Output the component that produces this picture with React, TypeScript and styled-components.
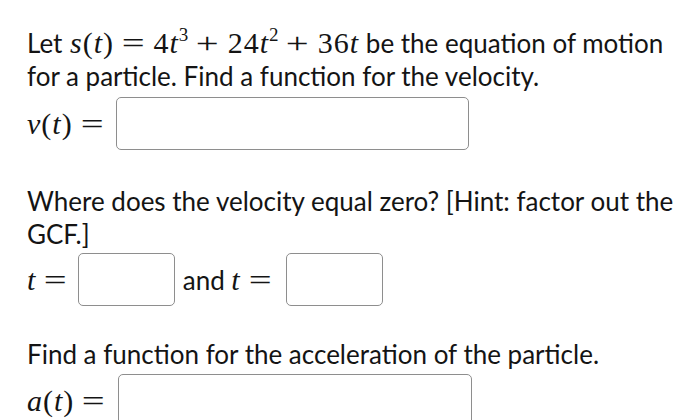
import React from "react";
import styled, { createGlobalStyle } from "styled-components";

const Global = createGlobalStyle`
  html, body { margin: 0; padding: 0; background: #ffffff; }
  body { font-family: Lato, "Open Sans", sans-serif; color: #141414; }
`;

const Page = styled.div`
  width: 700px;
  height: 420px;
  overflow: hidden;
  box-sizing: border-box;
  padding: 26px 10px 0 27px;
`;

const Para = styled.p<{ $top?: number }>`
  margin: ${(p) => p.$top ?? 0}px 0 0 0;
  font-size: 26px;
  line-height: 33px;
  width: 650px;
`;

const Row = styled.div<{ $top?: number }>`
  display: flex;
  align-items: center;
  margin-top: ${(p) => p.$top ?? 0}px;
  font-size: 26px;
  line-height: 33px;
`;

const Math = styled.span<{ $pad?: number }>`
  font-family: "Liberation Serif", "DejaVu Serif", serif;
  font-size: 30px;
  letter-spacing: 1px;
  white-space: nowrap;
  margin-left: ${(p) => p.$pad ?? 0}px;
`;

const V = styled.i`
  font-style: italic;
`;

const Sup = styled.sup`
  font-size: 19px;
  vertical-align: 12px;
  line-height: 0;
  letter-spacing: 0;
`;

const Op = styled.span`
  display: inline-block;
  font-family: "Liberation Serif", serif;
  font-size: 29px;
  letter-spacing: 0;
  transform: scaleX(1.4);
  margin: 0 12px 0 11px;
`;

const Box = styled.div<{ $w: number }>`
  width: ${(p) => p.$w}px;
  height: 51px;
  border: 1px solid #8e8e8e;
  border-radius: 5px;
  box-sizing: content-box;
  background: #fff;
  flex: none;
`;

const Label = styled.span<{ $gap: number }>`
  margin-right: ${(p) => p.$gap}px;
  display: inline-flex;
  align-items: baseline;
`;

const And = styled.span`
  margin: 0 6px 0 8px;
`;

export default function App() {
  return (
    <Page>
      <Global />
      <Para>
        Let{" "}
        <Math $pad={1}>
          <V>s</V>(<V>t</V>)<Op>=</Op>4<V>t</V>
          <Sup>3</Sup>
          <Op>+</Op>24<V>t</V>
          <Sup>2</Sup>
          <Op>+</Op>36<V>t</V>
        </Math>{" "}
        be the equation of motion for a particle. Find a function for the velocity.
      </Para>
      <Row $top={4}>
        <Label $gap={4}>
          <Math>
            <V>v</V>(<V>t</V>)<Op>=</Op>
          </Math>
        </Label>
        <Box $w={351} />
      </Row>
      <Para $top={35}>
        Where does the velocity equal zero? [Hint: factor out the GCF.]
      </Para>
      <Row $top={2}>
        <Label $gap={2}>
          <Math>
            <V>t</V>
            <Op>=</Op>
          </Math>
        </Label>
        <Box $w={95} />
        <And>
          and{" "}
          <Math>
            <V>t</V>
            <Op>=</Op>
          </Math>
        </And>
        <Box $w={95} />
      </Row>
      <Para $top={32}>Find a function for the acceleration of the particle.</Para>
      <Row $top={3}>
        <Label $gap={4}>
          <Math>
            <V>a</V>(<V>t</V>)<Op>=</Op>
          </Math>
        </Label>
        <Box $w={352} />
      </Row>
    </Page>
  );
}
